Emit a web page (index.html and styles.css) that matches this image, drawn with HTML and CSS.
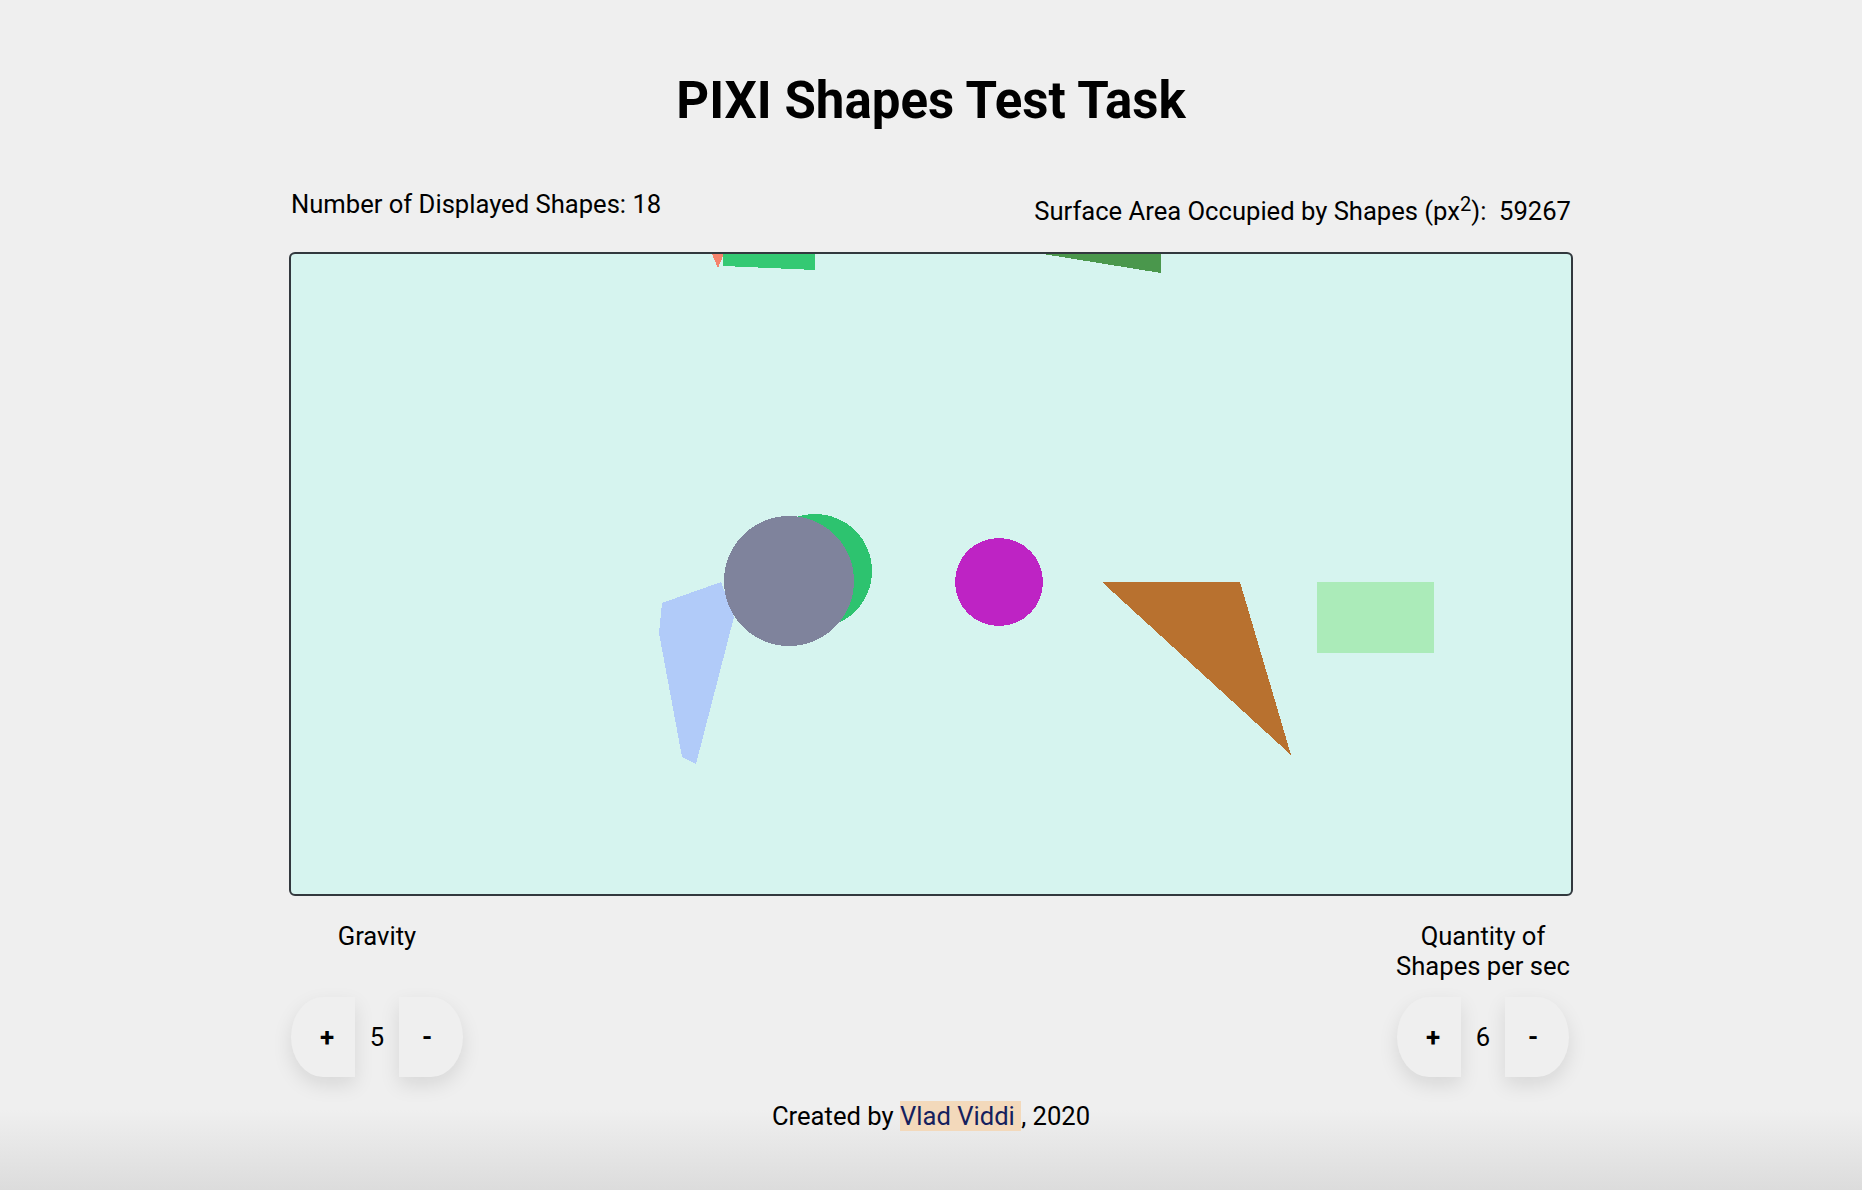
FILE: index.html
```html
<!DOCTYPE html>
<html lang="en">
<head>
<meta charset="utf-8">
<title>PIXI Shapes Test Task</title>
<link rel="stylesheet" href="styles.css">
</head>
<body>
<main class="app">
  <h1 class="title">PIXI Shapes Test Task</h1>
  <div class="stats">
    <p class="stat">Number of Displayed Shapes: <span>18</span></p>
    <p class="stat stat-area">Surface Area Occupied by Shapes (px<sup>2</sup>):&nbsp; <span>59267</span></p>
  </div>
  <div class="stage">
    <svg class="scene" width="1280" height="640" viewBox="0 0 1280 640" shape-rendering="crispEdges">
      <polygon points="421,0 433,0 427,14" fill="#f5836c"/>
      <polygon points="432,0 524,0 524,16 432,12" fill="#34c973"/>
      <polygon points="752,0 870,0 870,19" fill="#4a974c"/>
      <polygon points="371,349 430,328 443,363 405,510 391,503 368,379" fill="#b1cbf9"/>
      <circle cx="524" cy="317" r="57" fill="#2dc36f"/>
      <circle cx="498" cy="327" r="65" fill="#7f839c"/>
      <circle cx="708" cy="328" r="44" fill="#be23c4"/>
      <polygon points="811,328 949,328 1000,501" fill="#b8712f"/>
      <rect x="1026" y="328" width="117" height="71" fill="#abebb9"/>
    </svg>
  </div>
  <div class="controls">
    <div class="control">
      <p class="control-label">Gravity</p>
      <div class="stepper">
        <button class="btn btn-plus" type="button">+</button>
        <span class="value">5</span>
        <button class="btn btn-minus" type="button">-</button>
      </div>
    </div>
    <div class="control">
      <p class="control-label">Quantity of Shapes per sec</p>
      <div class="stepper">
        <button class="btn btn-plus" type="button">+</button>
        <span class="value">6</span>
        <button class="btn btn-minus" type="button">-</button>
      </div>
    </div>
  </div>
  <footer class="credits">Created by <a class="author" href="#">Vlad Viddi </a>, 2020</footer>
</main>
</body>
</html>
```

FILE: styles.css
```css
html {
  background: #efefef;
}
body {
  margin: 0;
  min-height: 1190px;
  font-family: Roboto, "Liberation Sans", Arial, sans-serif;
  color: #000;
  background: linear-gradient(to bottom, #efefef 0, #efefef 1110px, #dcdcdc 1190px);
}
.app {
  width: 1284px;
  margin: 0 auto;
  padding-top: 70px;
}
.title {
  margin: 0 0 58px;
  font-size: 51px;
  font-weight: 700;
  line-height: 61px;
  text-align: center;
}
.stats {
  display: flex;
  justify-content: space-between;
  align-items: flex-start;
  padding: 0 2px;
  margin-bottom: 26px;
}
.stat {
  margin: 0;
  font-size: 25.6px;
  line-height: 30px;
}
.stat-area {
  margin-top: 7px;
}
.stat sup {
  font-family: Roboto, "Liberation Sans", Arial, sans-serif;
  font-size: 20px;
  line-height: 0;
  vertical-align: 9px;
}
.stage {
  border: 2px solid #32383e;
  border-radius: 6px;
  background: #d6f4ef;
  height: 640px;
  overflow: hidden;
}
.scene {
  display: block;
}
.controls {
  display: flex;
  justify-content: space-between;
  padding: 0 4px 0 2px;
  margin-top: 25px;
}
.control {
  width: 172px;
  display: flex;
  flex-direction: column;
  align-items: center;
}
.control-label {
  margin: 0 -6px 16px;
  height: 60px;
  font-size: 25.6px;
  line-height: 30px;
  text-align: center;
}
.stepper {
  display: flex;
  align-items: center;
}
.btn {
  width: 64px;
  height: 80px;
  border: 0;
  background: #efefef;
  font-family: Roboto, "Liberation Sans", Arial, sans-serif;
  font-size: 26px;
  font-weight: 700;
  color: #000;
  box-shadow: 0 8px 20px rgba(0, 0, 0, 0.1);
  cursor: pointer;
}
.btn-plus {
  border-radius: 50% 0 0 50%;
  padding: 0 0 0 8px;
}
.btn-minus {
  border-radius: 0 50% 50% 0;
  padding: 0 8px 0 0;
}
.value {
  width: 44px;
  text-align: center;
  font-size: 25.6px;
}
.credits {
  margin-top: 24px;
  font-size: 25.6px;
  line-height: 30px;
  text-align: center;
}
.author {
  color: #15215e;
  background: #f3d9bb;
  text-decoration: none;
}
```
